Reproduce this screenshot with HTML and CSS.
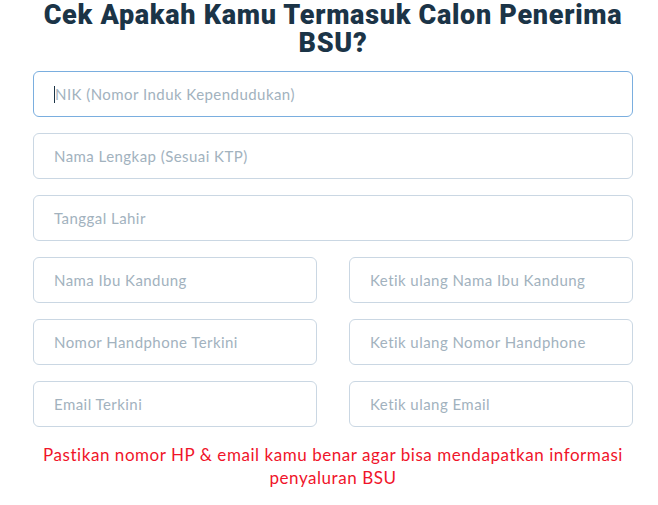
FILE: index.html
```html
<!DOCTYPE html>
<html lang="id">
<head>
<meta charset="utf-8">
<title>Cek BSU</title>
<link rel="stylesheet" href="styles.css">
</head>
<body>
<main class="page">
  <h1 class="title">Cek Apakah Kamu Termasuk Calon Penerima BSU?</h1>
  <form class="form">
    <div class="field focus"><span class="caret"></span><span class="ph">NIK (Nomor Induk Kependudukan)</span></div>
    <div class="field"><span class="ph">Nama Lengkap (Sesuai KTP)</span></div>
    <div class="field"><span class="ph">Tanggal Lahir</span></div>
    <div class="row">
      <div class="field"><span class="ph">Nama Ibu Kandung</span></div>
      <div class="field"><span class="ph">Ketik ulang Nama Ibu Kandung</span></div>
    </div>
    <div class="row">
      <div class="field"><span class="ph">Nomor Handphone Terkini</span></div>
      <div class="field"><span class="ph">Ketik ulang Nomor Handphone</span></div>
    </div>
    <div class="row">
      <div class="field"><span class="ph">Email Terkini</span></div>
      <div class="field"><span class="ph">Ketik ulang Email</span></div>
    </div>
  </form>
  <p class="note">Pastikan nomor HP &amp; email kamu benar agar bisa mendapatkan informasi penyaluran BSU</p>
</main>
</body>
</html>
```

FILE: styles.css
```css
* { box-sizing: border-box; }
html, body { margin: 0; padding: 0; background: #ffffff; }
body { font-family: "Lato", "Open Sans", sans-serif; }
.page {
  width: 600px;
  margin-left: 33px;
}
.title {
  margin: 0;
  padding: 1px 0 0;
  text-align: center;
  font-family: "Roboto", "Lato", sans-serif;
  font-weight: 900;
  font-size: 27px;
  line-height: 28px;
  color: #1b3447;
  letter-spacing: 0.7px;
}
.form {
  display: flex;
  flex-direction: column;
  gap: 16px;
  margin-top: 14px;
}
.row {
  display: grid;
  grid-template-columns: 1fr 1fr;
  column-gap: 32px;
}
.field {
  height: 46px;
  border: 1px solid #cad7e3;
  border-radius: 6px;
  display: flex;
  align-items: center;
  padding-left: 20px;
}
.field.focus { border-color: #7aaedf; }
.ph {
  font-size: 15px;
  color: #a2b2be;
  letter-spacing: 0.45px;
}
.caret {
  width: 1px;
  height: 17px;
  background: #1b3447;
}
.note {
  margin: 16px 0 0;
  text-align: center;
  font-size: 17px;
  font-weight: 400;
  line-height: 23px;
  color: #f0142a;
  letter-spacing: 0.55px;
}
```
